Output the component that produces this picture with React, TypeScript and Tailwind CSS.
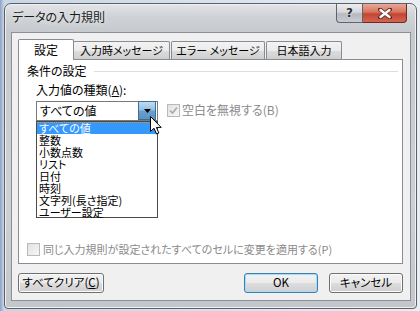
import React from 'react';

const listItems = [
  'すべての値',
  '整数',
  '小数点数',
  'リスト',
  '日付',
  '時刻',
  '文字列(長さ指定)',
  'ユーザー設定',
];

const otherTabs = [
  { label: '入力時メッセージ', width: 'w-[97px]' },
  { label: 'エラー メッセージ', width: 'w-[94px]' },
  { label: '日本語入力', width: 'w-[76px]' },
];

function DisabledCheck({ checked }: { checked?: boolean }) {
  return (
    <span className="w-[13px] h-[13px] border border-[#b9b9b9] bg-gradient-to-br from-[#e2e2e2] to-[#f6f6f6] flex items-center justify-center shrink-0">
      {checked && (
        <svg width="9" height="9" viewBox="0 0 9 9">
          <path d="M1 4.5 L3.5 7 L8 1.5" fill="none" stroke="#a8a8a8" strokeWidth="1.6" />
        </svg>
      )}
    </span>
  );
}

function PushButton({ children, isDefault, width }: { children: React.ReactNode; isDefault?: boolean; width: string }) {
  return (
    <button
      className={`${width} h-[20px] rounded-[3px] border text-[11.5px] leading-none text-black flex items-center justify-center bg-[linear-gradient(#f2f2f2_0%,#ebebeb_48%,#dddddd_52%,#cfcfcf_100%)] ${
        isDefault ? 'border-[#3c7fb1] shadow-[inset_0_0_0_1px_#a8dbf6]' : 'border-[#707070] shadow-[inset_0_0_0_1px_#fbfbfb]'
      }`}
    >
      {children}
    </button>
  );
}

export default function App() {
  return (
    <div className="w-[420px] h-[311px] overflow-hidden bg-[linear-gradient(90deg,#8ba3c4_0px,#c9d6e6_4px,#e9eef4_100%)] font-['Noto_Sans_CJK_JP',sans-serif] [font-feature-settings:'palt'] text-black">
      <div className="ml-[4px] mt-[3px] w-[413px] h-[306px] rounded-t-[7px] rounded-b-[4px] border border-[#5d6167] bg-[linear-gradient(180deg,#e3e5e8_0px,#cfd2d6_12px,#c6c9ce_28px,#cdd0d4_200px,#c3c6cb_100%)] shadow-[inset_0_0_0_1px_#eef0f2] flex flex-col">
        {/* title bar */}
        <div className="h-[28px] flex items-start shrink-0">
          <span className="ml-[7px] mt-[6px] text-[12px] leading-[14px] text-[#1b1b1b] [text-shadow:0_0_6px_#ffffff]">
            データの入力規則
          </span>
          <div className="ml-auto mr-[9px] flex">
            <div className="w-[27px] h-[19px] rounded-bl-[4px] border border-[#5f656d] border-t-0 bg-[linear-gradient(#eceef0_0%,#d4d7db_45%,#b6bac0_55%,#c8ccd1_100%)] flex items-center justify-center">
              <span className="text-[12px] font-bold leading-none text-[#2b3036] [text-shadow:0_0_2px_#ffffff] font-['DejaVu_Sans',sans-serif]">?</span>
            </div>
            <div className="w-[44px] h-[19px] rounded-br-[4px] border border-[#6b2a22] border-t-0 border-l-0 bg-[linear-gradient(#e9a898_0%,#d7745f_45%,#c24532_55%,#d4654f_100%)] flex items-center justify-center">
              <svg width="14" height="11" viewBox="0 0 14 11">
                <path d="M2 1.5 L12 9.5 M12 1.5 L2 9.5" stroke="#5a2a24" strokeWidth="4" strokeLinecap="round" />
                <path d="M2.5 2 L11.5 9 M11.5 2 L2.5 9" stroke="#ffffff" strokeWidth="2.4" strokeLinecap="round" />
              </svg>
            </div>
          </div>
        </div>

        {/* client area */}
        <div className="ml-[6px] w-[400px] h-[269px] border border-[#8b9097] bg-[#f0f0f0] flex flex-col pl-[6px] pt-[5px]">
          {/* tabs */}
          <div className="h-[21px] flex items-end relative z-10">
            <div className="w-[56px] h-[21px] -mb-[1px] border border-[#898c95] border-b-0 bg-white rounded-t-[2px] flex items-center justify-center text-[12px] leading-none pb-[1px]">
              設定
            </div>
            <div className="flex items-end -ml-[1px]">
              {otherTabs.map((t, i) => (
                <div
                  key={t.label}
                  className={`${t.width} ${i > 0 ? 'ml-[1px]' : ''} h-[18px] border border-[#898c95] border-b-0 rounded-t-[2px] bg-[linear-gradient(#f3f3f3_0%,#ebebeb_50%,#dddddd_51%,#cfcfcf_100%)] flex items-center justify-center text-[11px] leading-none`}
                >
                  {t.label}
                </div>
              ))}
            </div>
          </div>

          {/* panel */}
          <div className="w-[385px] h-[205px] border border-[#898c95] bg-white flex flex-col pl-[8px] pt-[4px] pb-[7px]">
            <div className="flex items-center h-[14px]">
              <span className="text-[12px] leading-[14px]">条件の設定</span>
              <div className="flex-1 h-px bg-[#d5dfe5] ml-[7px] mr-[4px]" />
            </div>
            <div className="ml-[9px] mt-[5px] text-[12px] leading-[14px]">
              入力値の種類(<span className="underline">A</span>):
            </div>
            <div className="ml-[9px] mt-[4px] flex items-start">
              <div className="relative w-[122px] h-[20px] border border-[#7a7a7a] bg-white flex items-center">
                <span className="ml-[3px] text-[12px] leading-none">すべての値</span>
                <div className="absolute right-[1px] top-[-1px] w-[18px] h-[19px] border border-[#3c6e96] bg-[linear-gradient(#c0dcf2_0%,#94c0e4_45%,#6a9fcc_55%,#5b92c0_100%)] flex items-center justify-center">
                  <svg width="7" height="4" viewBox="0 0 7 4">
                    <path d="M0 0 L7 0 L3.5 4 Z" fill="#000000" />
                  </svg>
                </div>

                {/* dropdown list */}
                <div className="absolute left-[-1px] top-[19px] w-[122px] h-[97px] border border-[#4a4a4a] bg-white z-20 flex flex-col">
                  {listItems.map((item, i) => (
                    <div
                      key={item}
                      className={`h-[12px] pl-[2px] text-[11px] whitespace-nowrap overflow-visible ${
                        i === 0
                          ? 'bg-[#3399ff] text-white border-t border-dotted border-[#e8902c] leading-[11px]'
                          : 'leading-[12px]'
                      }`}
                    >
                      {item}
                    </div>
                  ))}
                </div>

                {/* mouse cursor */}
                <svg className="absolute left-[113px] top-[14px] z-30" width="13" height="19" viewBox="0 0 13 19">
                  <path
                    d="M0.5 0.5 L0.5 15.5 L4 12.2 L6.6 18 L8.9 17 L6.4 11.4 L11.2 11.4 Z"
                    fill="#ffffff"
                    stroke="#000000"
                    strokeWidth="1"
                    strokeLinejoin="miter"
                  />
                </svg>
              </div>
              <div className="ml-[9px] mt-[2px] flex items-center gap-[2px]">
                <DisabledCheck checked />
                <span className="text-[12px] leading-[14px] text-[#8a8a8a]">空白を無視する(B)</span>
              </div>
            </div>

            <div className="mt-auto flex items-center gap-[3px]">
              <DisabledCheck />
              <span className="text-[11px] leading-[14px] text-[#8a8a8a] whitespace-nowrap">
                同じ入力規則が設定されたすべてのセルに変更を適用する(P)
              </span>
            </div>
          </div>

          {/* buttons */}
          <div className="mt-[9px] flex items-center">
            <PushButton width="w-[86px]">
              すべてクリア(<span className="underline">C</span>)
            </PushButton>
            <div className="ml-auto mr-[7px] flex gap-[11px]">
              <PushButton width="w-[74px]" isDefault>
                OK
              </PushButton>
              <PushButton width="w-[74px]">キャンセル</PushButton>
            </div>
          </div>
        </div>
      </div>
    </div>
  );
}
